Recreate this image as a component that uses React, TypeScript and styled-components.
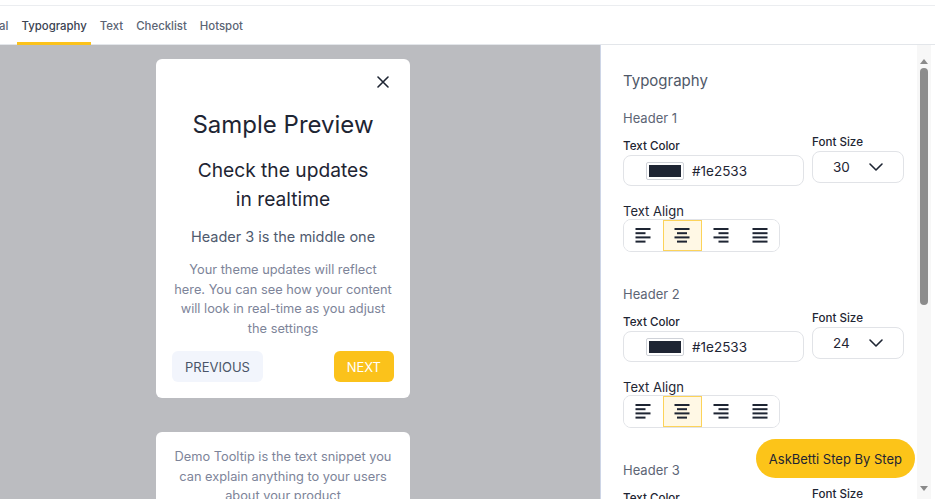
import React from "react";
import styled, { createGlobalStyle } from "styled-components";

const Global = createGlobalStyle`
  html, body { margin: 0; padding: 0; height: 100%; overflow: hidden; }
  body { font-family: Inter, "Noto Sans", Arial, sans-serif; background: #fff; color: #1e2533; }
  #root { height: 100%; }
  * { box-sizing: border-box; }
`;

const Page = styled.div`
  height: 100vh;
  display: flex;
  flex-direction: column;
`;

const TopStrip = styled.div`
  height: 6px;
  border-bottom: 1px solid #ebedf0;
  flex-shrink: 0;
`;

const TabBar = styled.nav`
  height: 39px;
  flex-shrink: 0;
  display: flex;
  align-items: stretch;
  border-bottom: 1px solid #e3e6ea;
`;

const TabList = styled.div`
  display: flex;
  gap: 5px;
  margin-left: -38px;
  margin-bottom: -1px;
`;

const Tab = styled.div<{ $active?: boolean }>`
  padding: 4px 4px 0;
  display: flex;
  align-items: center;
  font-size: 11.4px;
  font-weight: 500;
  color: ${(p) => (p.$active ? "#3b4352" : "#5b6474")};
  border-bottom: 3px solid ${(p) => (p.$active ? "#fbc21b" : "transparent")};
  white-space: nowrap;
`;

const Main = styled.div`
  flex: 1;
  min-height: 0;
  display: flex;
  overflow: hidden;
`;

const Preview = styled.section`
  width: 601px;
  flex-shrink: 0;
  background: #bbbcc0;
  display: flex;
  flex-direction: column;
  align-items: flex-start;
  padding: 14px 0 0 156px;
  gap: 34px;
  overflow: hidden;
  border-right: 1px solid #cdd5e6;
`;

const Card = styled.div`
  width: 254px;
  background: #fff;
  border-radius: 6px;
  display: flex;
  flex-direction: column;
  align-items: center;
  text-align: center;
  padding: 17px 15px 16px;
  flex-shrink: 0;
`;

const CloseRow = styled.div`
  align-self: stretch;
  display: flex;
  justify-content: flex-end;
  padding-right: 6px;
  height: 12px;
`;

const Title = styled.h1`
  margin: 22px 0 0;
  font-size: 24px;
  line-height: 30px;
  font-weight: 400;
  color: #1e2533;
`;

const Subtitle = styled.h2`
  margin: 16px 0 0;
  font-size: 19.2px;
  line-height: 29px;
  font-weight: 400;
  color: #1e2533;
`;

const Header3 = styled.h3`
  margin: 13px 0 0;
  font-size: 14.5px;
  line-height: 20px;
  font-weight: 400;
  color: #4f5a6e;
`;

const Body = styled.p<{ $top?: number }>`
  margin: ${(p) => p.$top ?? 13}px 0 0;
  max-width: 218px;
  font-size: 12.8px;
  line-height: 19.5px;
  color: #7d8499;
`;

const ButtonRow = styled.div`
  align-self: stretch;
  margin-top: 13px;
  padding: 0 1px;
  display: flex;
  justify-content: space-between;
`;

const NavButton = styled.button<{ $primary?: boolean }>`
  height: 31px;
  padding: 0 13px;
  border: none;
  border-radius: 6px;
  font-family: inherit;
  font-size: 13px;
  background: ${(p) => (p.$primary ? "#fbc21b" : "#f2f5fc")};
  color: ${(p) => (p.$primary ? "#ffffff" : "#4a5568")};
`;

const Panel = styled.aside`
  flex: 1;
  display: flex;
  min-width: 0;
  overflow: hidden;
`;

const PanelContent = styled.div`
  flex: 1;
  padding: 26px 0 0 22px;
  display: flex;
  flex-direction: column;
`;

const PanelTitle = styled.div`
  font-size: 15px;
  line-height: 20px;
  color: #4f5868;
  font-weight: 400;
`;

const Section = styled.div<{ $first?: boolean }>`
  display: flex;
  flex-direction: column;
  margin-top: ${(p) => (p.$first ? 18 : 33)}px;
`;

const SectionTitle = styled.div`
  font-size: 13px;
  line-height: 18px;
  color: #5d6575;
`;

const FieldRow = styled.div`
  display: flex;
  gap: 8px;
  align-items: flex-end;
  margin-top: 9px;
`;

const Field = styled.div<{ $lift?: number }>`
  display: flex;
  flex-direction: column;
  gap: 2px;
  margin-bottom: ${(p) => p.$lift ?? 0}px;
`;

const Label = styled.div<{ $strong?: boolean }>`
  font-size: ${(p) => (p.$strong ? 11.6 : 13)}px;
  line-height: ${(p) => (p.$strong ? 13 : 16)}px;
  font-weight: ${(p) => (p.$strong ? 500 : 400)};
  color: #1e2533;
`;

const ColorInput = styled.div`
  width: 181px;
  height: 31px;
  border: 1px solid #e1e3e7;
  border-radius: 8px;
  display: flex;
  align-items: center;
  padding-left: 22px;
  gap: 8px;
  font-size: 13.5px;
  color: #1e2533;
`;

const Swatch = styled.div<{ $color: string }>`
  width: 38px;
  height: 18px;
  border: 1px solid #cfd2d8;
  border-radius: 2px;
  padding: 2px;
  &::after {
    content: "";
    display: block;
    width: 100%;
    height: 100%;
    background: ${(p) => p.$color};
  }
`;

const Select = styled.div`
  width: 92px;
  height: 32px;
  border: 1px solid #e1e3e7;
  border-radius: 8px;
  display: flex;
  align-items: center;
  padding-left: 20px;
  gap: 18px;
  font-size: 13.5px;
  color: #1e2533;
`;

const AlignBlock = styled.div`
  display: flex;
  flex-direction: column;
  gap: 0;
  margin-top: 17px;
`;

const AlignGroup = styled.div`
  display: flex;
  width: 157px;
  height: 33px;
  border: 1px solid #e1e3e7;
  border-radius: 8px;
  overflow: hidden;
`;

const AlignButton = styled.div<{ $active?: boolean }>`
  flex: 1;
  display: flex;
  align-items: center;
  justify-content: center;
  background: ${(p) => (p.$active ? "#fff8e5" : "#fff")};
  border: 1px solid ${(p) => (p.$active ? "#fcd35a" : "transparent")};
`;

const ScrollTrack = styled.div`
  width: 14px;
  margin-right: 4px;
  flex-shrink: 0;
  background: #f7f7f7;
  display: flex;
  flex-direction: column;
  align-items: center;
  padding: 14px 0 8px;
`;

const ScrollArrow = styled.div<{ $down?: boolean }>`
  width: 0;
  height: 0;
  border-left: 4px solid transparent;
  border-right: 4px solid transparent;
  ${(p) =>
    p.$down
      ? "border-top: 5px solid #8a8a8a;"
      : "border-bottom: 5px solid #8a8a8a;"}
`;

const ScrollThumb = styled.div`
  width: 8px;
  height: 237px;
  margin-top: 4px;
  border-radius: 4px;
  background: #8c8c8c;
`;

const ScrollSpacer = styled.div`
  flex: 1;
`;

const HelpButton = styled.button`
  position: fixed;
  right: 20px;
  bottom: 21px;
  height: 39px;
  padding: 0 13px;
  border: none;
  border-radius: 20px;
  background: #fcc419;
  color: #1e2533;
  font-family: inherit;
  font-size: 13px;
`;

type Align = "left" | "center" | "right" | "justify";

const AlignIcon = ({ kind }: { kind: Align }) => {
  const full = 15;
  const short = 10;
  const xs = (w: number) =>
    kind === "left" ? 0.5 : kind === "right" ? full + 0.5 - w : (full + 1 - w) / 2;
  const rows = [full, kind === "justify" ? full : short, full, kind === "justify" ? full : short];
  return (
    <svg width="16" height="15" viewBox="0 0 16 15">
      {rows.map((w, i) => (
        <rect key={i} x={xs(w)} y={i * 4.2} width={w} height={2} fill="#1e2533" />
      ))}
    </svg>
  );
};

const CloseIcon = () => (
  <svg width="12" height="12" viewBox="0 0 12 12">
    <path d="M1 1L11 11M11 1L1 11" stroke="#1e2533" strokeWidth="1.6" strokeLinecap="round" />
  </svg>
);

const Chevron = () => (
  <svg width="16" height="16" viewBox="0 0 16 16">
    <path d="M2 5l6 6 6-6" stroke="#1e2533" strokeWidth="1.6" fill="none" strokeLinecap="round" strokeLinejoin="round" />
  </svg>
);

const HeaderSettings = ({ title, size, first }: { title: string; size: number; first?: boolean }) => (
  <Section $first={first}>
    <SectionTitle>{title}</SectionTitle>
    <FieldRow>
      <Field>
        <Label $strong>Text Color</Label>
        <ColorInput>
          <Swatch $color="#1e2533" />
          #1e2533
        </ColorInput>
      </Field>
      <Field $lift={3}>
        <Label $strong>Font Size</Label>
        <Select>
          {size}
          <Chevron />
        </Select>
      </Field>
    </FieldRow>
    <AlignBlock>
      <Label>Text Align</Label>
      <AlignGroup>
        {(["left", "center", "right", "justify"] as Align[]).map((a) => (
          <AlignButton key={a} $active={a === "center"}>
            <AlignIcon kind={a} />
          </AlignButton>
        ))}
      </AlignGroup>
    </AlignBlock>
  </Section>
);

export default function App() {
  return (
    <Page>
      <Global />
      <TopStrip />
      <TabBar>
        <TabList>
          <Tab>General</Tab>
          <Tab $active>Typography</Tab>
          <Tab>Text</Tab>
          <Tab>Checklist</Tab>
          <Tab>Hotspot</Tab>
        </TabList>
      </TabBar>
      <Main>
        <Preview>
          <Card>
            <CloseRow>
              <CloseIcon />
            </CloseRow>
            <Title>Sample Preview</Title>
            <Subtitle>
              Check the updates
              <br />
              in realtime
            </Subtitle>
            <Header3>Header 3 is the middle one</Header3>
            <Body>
              Your theme updates will reflect here. You can see how your content will look in
              real-time as you adjust the settings
            </Body>
            <ButtonRow>
              <NavButton>PREVIOUS</NavButton>
              <NavButton $primary>NEXT</NavButton>
            </ButtonRow>
          </Card>
          <Card>
            <Body $top={-2}>
              Demo Tooltip is the text snippet you can explain anything to your users about your
              product
            </Body>
          </Card>
        </Preview>
        <Panel>
          <PanelContent>
            <PanelTitle>Typography</PanelTitle>
            <HeaderSettings title="Header 1" size={30} first />
            <HeaderSettings title="Header 2" size={24} />
            <HeaderSettings title="Header 3" size={20} />
          </PanelContent>
          <ScrollTrack>
            <ScrollArrow />
            <ScrollThumb />
            <ScrollSpacer />
            <ScrollArrow $down />
          </ScrollTrack>
        </Panel>
      </Main>
      <HelpButton>AskBetti Step By Step</HelpButton>
    </Page>
  );
}
